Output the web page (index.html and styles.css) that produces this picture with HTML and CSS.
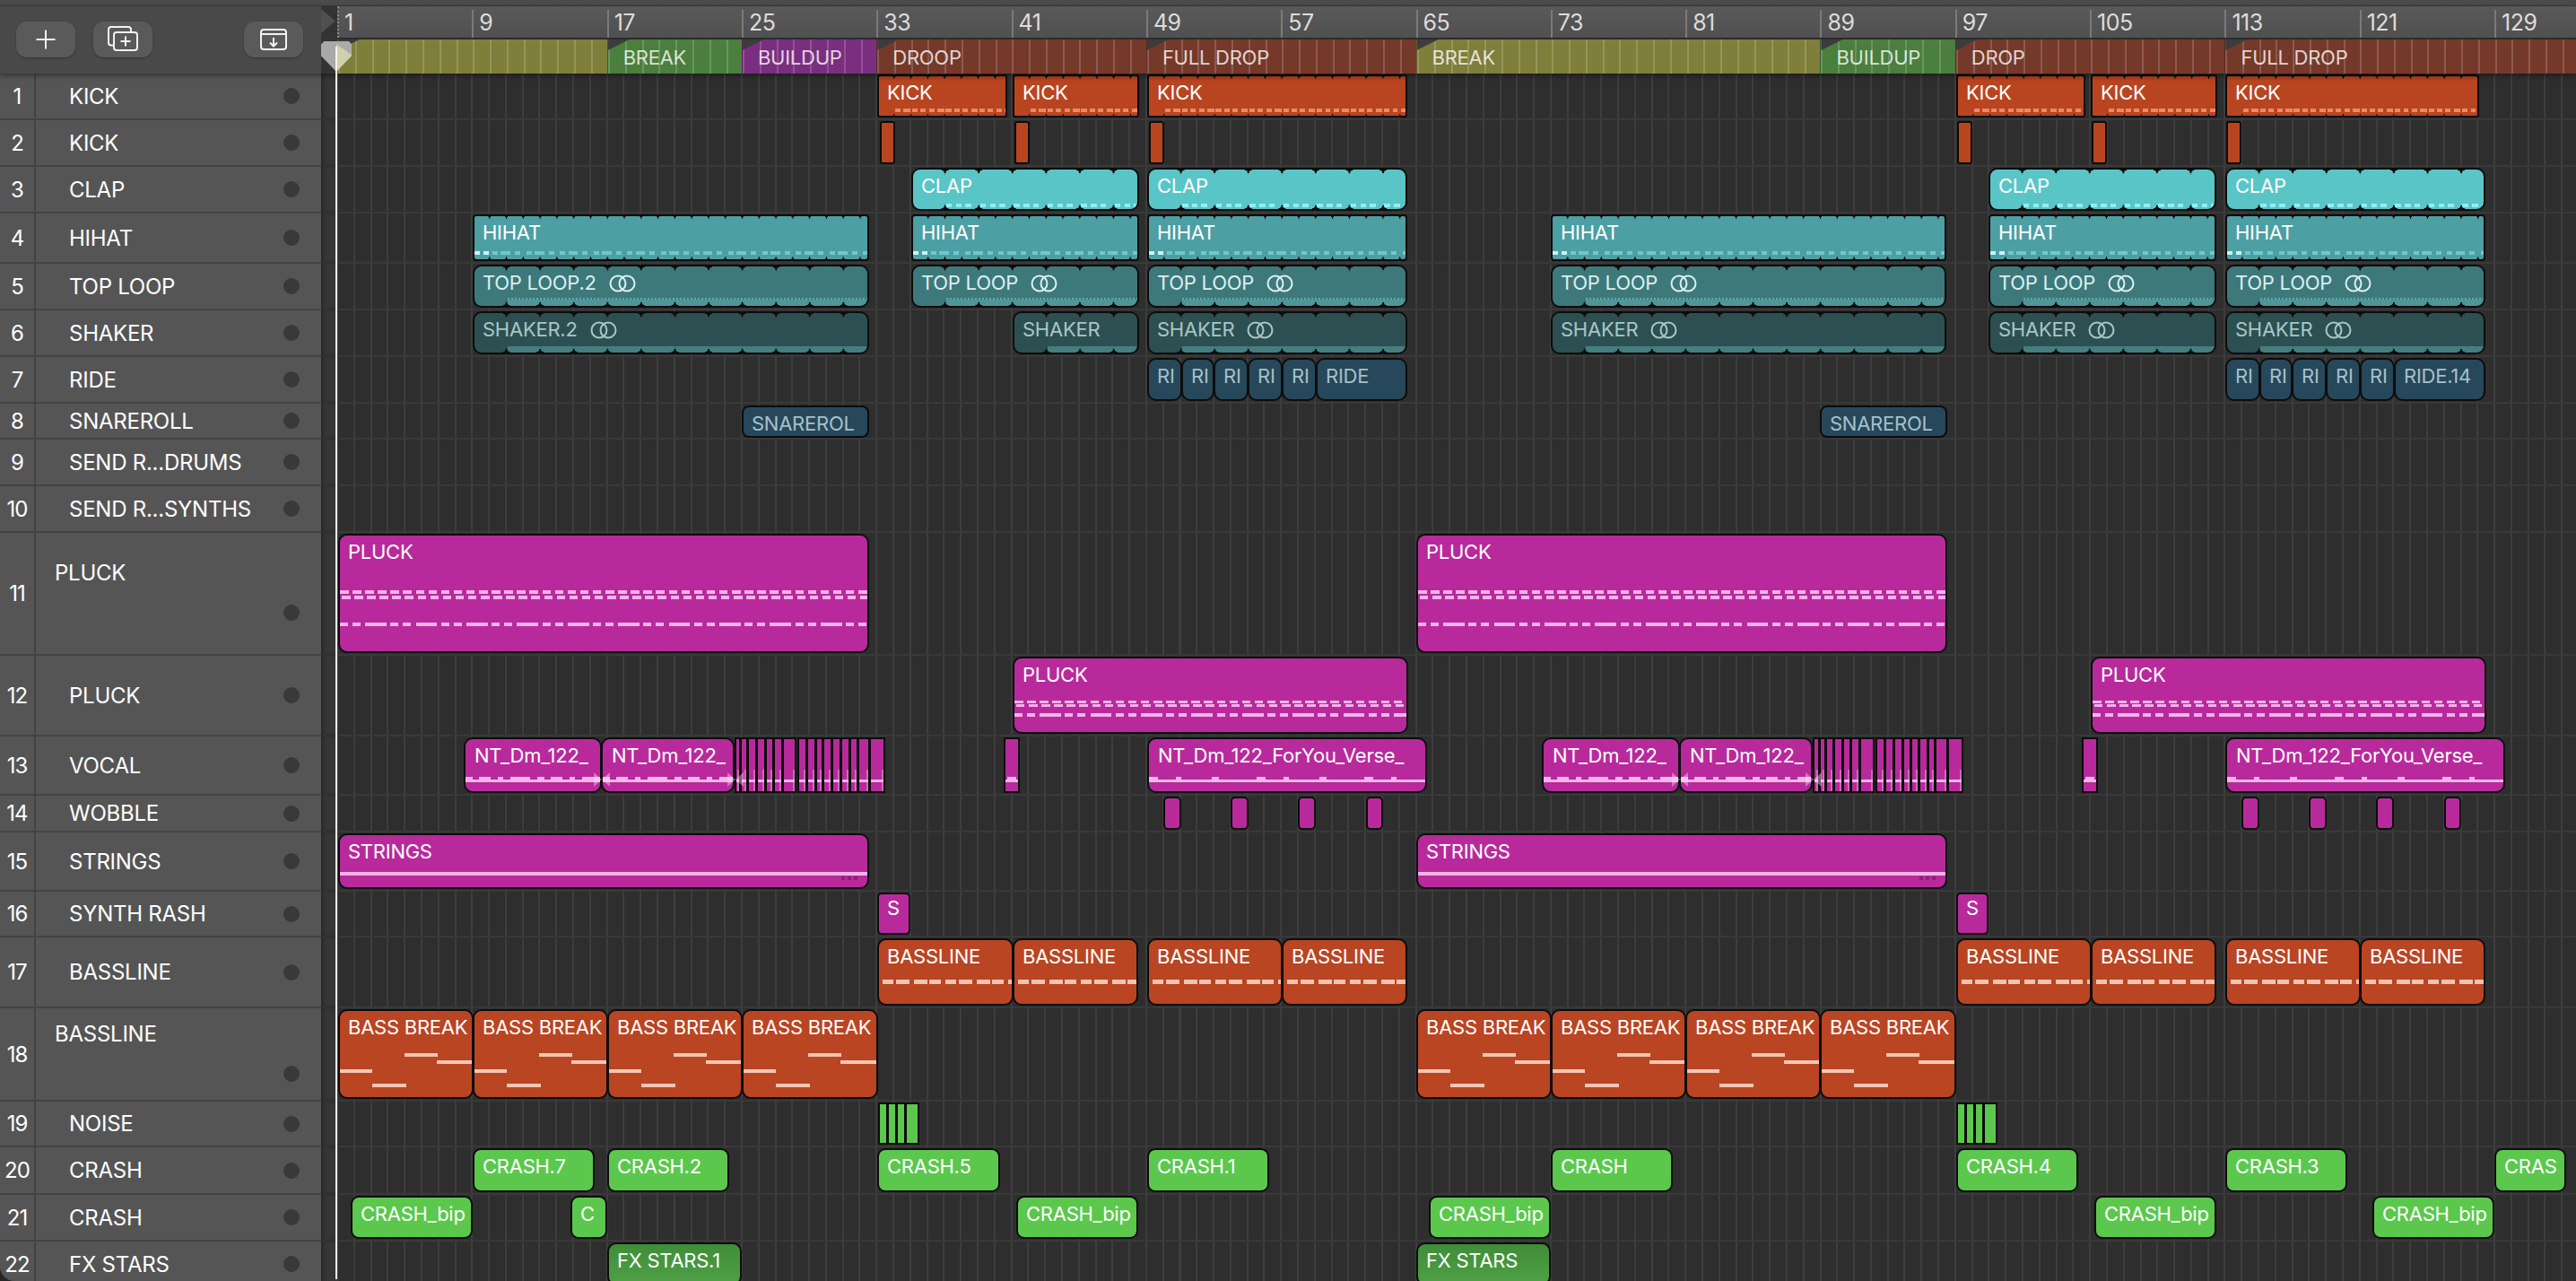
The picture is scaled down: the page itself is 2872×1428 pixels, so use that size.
FILE: index.html
```html
<!DOCTYPE html>
<html lang="en">
<head>
<meta charset="utf-8">
<title>Arrangement</title>
<link rel="stylesheet" href="styles.css">
</head>
<body>
<div class="daw">
  <div class="topstrip"></div>
  <header class="header">
    <div class="tools">
      <button class="tool" aria-label="New track"><svg width="24" height="24" viewBox="0 0 24 24"><path d="M12 1.5v21M1.5 12h21"/></svg></button>
      <button class="tool" aria-label="Duplicate track"><svg width="36" height="30" viewBox="0 0 36 30"><path d="M7 21.5H5a3 3 0 0 1-3-3V4a3 3 0 0 1 3-3h19a3 3 0 0 1 3 3v3"/><rect x="8" y="7" width="26" height="20" rx="3"/><path d="M21 11.5v11M15.5 17h11"/></svg></button>
      <button class="tool tool-end" aria-label="Load"><svg width="32" height="26" viewBox="0 0 32 26"><rect x="2" y="2" width="28" height="22" rx="3"/><path d="M2 7h28M16 11v9M12 16.5l4 4 4-4"/></svg></button>
    </div>
    <div class="corner"><span class="corner-tri"></span></div>
    <div class="timebar">
      <div class="ruler">
        <span class="bar first">1</span><span class="bar">9</span><span class="bar">17</span><span class="bar">25</span><span class="bar">33</span><span class="bar">41</span><span class="bar">49</span><span class="bar">57</span><span class="bar">65</span><span class="bar">73</span><span class="bar">81</span><span class="bar">89</span><span class="bar">97</span><span class="bar">105</span><span class="bar">113</span><span class="bar">121</span><span class="bar">129</span>
      </div>
      <div class="markers">
        <div class="marker olive" style="--b:16"></div>
        <div class="marker green" style="--b:8">BREAK</div>
        <div class="marker purple" style="--b:8">BUILDUP</div>
        <div class="marker brown" style="--b:16">DROOP</div>
        <div class="marker brown" style="--b:16">FULL DROP</div>
        <div class="marker olive" style="--b:24">BREAK</div>
        <div class="marker green" style="--b:8">BUILDUP</div>
        <div class="marker brown" style="--b:16">DROP</div>
        <div class="marker brown last">FULL DROP</div>
      </div>
    </div>
  </header>

  <main class="tracks">
    <section class="track h52">
      <div class="head"><span class="num">1</span><span class="name">KICK</span><span class="dot"></span></div><div class="gutter"></div>
      <div class="lane">
        <div class="clip notched kick" style="--x:978;--w:145">KICK</div>
        <div class="clip notched kick" style="--x:1129;--w:141">KICK</div>
        <div class="clip notched kick" style="--x:1279;--w:290">KICK</div>
        <div class="clip notched kick" style="--x:2181;--w:144">KICK</div>
        <div class="clip notched kick" style="--x:2331;--w:141">KICK</div>
        <div class="clip notched kick" style="--x:2481;--w:283">KICK</div>
      </div>
    </section>
    <section class="track h52">
      <div class="head"><span class="num">2</span><span class="name">KICK</span><span class="dot"></span></div><div class="gutter"></div>
      <div class="lane">
        <div class="clip tick" style="--x:981;--w:17"></div>
        <div class="clip tick" style="--x:1131;--w:17"></div>
        <div class="clip tick" style="--x:1281;--w:17"></div>
        <div class="clip tick" style="--x:2182;--w:17"></div>
        <div class="clip tick" style="--x:2332;--w:17"></div>
        <div class="clip tick" style="--x:2482;--w:17"></div>
      </div>
    </section>
    <section class="track h52">
      <div class="head"><span class="num">3</span><span class="name">CLAP</span><span class="dot"></span></div><div class="gutter"></div>
      <div class="lane">
        <div class="clip notched clap" style="--x:1016;--w:254">CLAP</div>
        <div class="clip notched clap" style="--x:1279;--w:290">CLAP</div>
        <div class="clip notched clap" style="--x:2217;--w:254">CLAP</div>
        <div class="clip notched clap" style="--x:2481;--w:290">CLAP</div>
      </div>
    </section>
    <section class="track h56">
      <div class="head"><span class="num">4</span><span class="name">HIHAT</span><span class="dot"></span></div><div class="gutter"></div>
      <div class="lane">
        <div class="clip notched hat" style="--x:527;--w:442">HIHAT</div>
        <div class="clip notched hat" style="--x:1016;--w:254">HIHAT</div>
        <div class="clip notched hat" style="--x:1279;--w:290">HIHAT</div>
        <div class="clip notched hat" style="--x:1729;--w:441">HIHAT</div>
        <div class="clip notched hat" style="--x:2217;--w:254">HIHAT</div>
        <div class="clip notched hat" style="--x:2481;--w:290">HIHAT</div>
      </div>
    </section>
    <section class="track h52">
      <div class="head"><span class="num">5</span><span class="name">TOP LOOP</span><span class="dot"></span></div><div class="gutter"></div>
      <div class="lane">
        <div class="clip notched tloop" style="--x:527;--w:442">TOP LOOP.2<svg class="loop" width="30" height="20" viewBox="0 0 30 20"><circle cx="10" cy="10" r="8.5"/><circle cx="20" cy="10" r="8.5"/></svg></div>
        <div class="clip notched tloop" style="--x:1016;--w:254">TOP LOOP<svg class="loop" width="30" height="20" viewBox="0 0 30 20"><circle cx="10" cy="10" r="8.5"/><circle cx="20" cy="10" r="8.5"/></svg></div>
        <div class="clip notched tloop" style="--x:1279;--w:290">TOP LOOP<svg class="loop" width="30" height="20" viewBox="0 0 30 20"><circle cx="10" cy="10" r="8.5"/><circle cx="20" cy="10" r="8.5"/></svg></div>
        <div class="clip notched tloop" style="--x:1729;--w:441">TOP LOOP<svg class="loop" width="30" height="20" viewBox="0 0 30 20"><circle cx="10" cy="10" r="8.5"/><circle cx="20" cy="10" r="8.5"/></svg></div>
        <div class="clip notched tloop" style="--x:2217;--w:254">TOP LOOP<svg class="loop" width="30" height="20" viewBox="0 0 30 20"><circle cx="10" cy="10" r="8.5"/><circle cx="20" cy="10" r="8.5"/></svg></div>
        <div class="clip notched tloop" style="--x:2481;--w:290">TOP LOOP<svg class="loop" width="30" height="20" viewBox="0 0 30 20"><circle cx="10" cy="10" r="8.5"/><circle cx="20" cy="10" r="8.5"/></svg></div>
      </div>
    </section>
    <section class="track h52">
      <div class="head"><span class="num">6</span><span class="name">SHAKER</span><span class="dot"></span></div><div class="gutter"></div>
      <div class="lane">
        <div class="clip notched shk" style="--x:527;--w:442">SHAKER.2<svg class="loop" width="30" height="20" viewBox="0 0 30 20"><circle cx="10" cy="10" r="8.5"/><circle cx="20" cy="10" r="8.5"/></svg></div>
        <div class="clip notched shk" style="--x:1129;--w:141">SHAKER</div>
        <div class="clip notched shk" style="--x:1279;--w:290">SHAKER<svg class="loop" width="30" height="20" viewBox="0 0 30 20"><circle cx="10" cy="10" r="8.5"/><circle cx="20" cy="10" r="8.5"/></svg></div>
        <div class="clip notched shk" style="--x:1729;--w:441">SHAKER<svg class="loop" width="30" height="20" viewBox="0 0 30 20"><circle cx="10" cy="10" r="8.5"/><circle cx="20" cy="10" r="8.5"/></svg></div>
        <div class="clip notched shk" style="--x:2217;--w:254">SHAKER<svg class="loop" width="30" height="20" viewBox="0 0 30 20"><circle cx="10" cy="10" r="8.5"/><circle cx="20" cy="10" r="8.5"/></svg></div>
        <div class="clip notched shk" style="--x:2481;--w:290">SHAKER<svg class="loop" width="30" height="20" viewBox="0 0 30 20"><circle cx="10" cy="10" r="8.5"/><circle cx="20" cy="10" r="8.5"/></svg></div>
      </div>
    </section>
    <section class="track h52">
      <div class="head"><span class="num">7</span><span class="name">RIDE</span><span class="dot"></span></div><div class="gutter"></div>
      <div class="lane">
        <div class="clip ride" style="--x:1279;--w:39">RI</div>
        <div class="clip ride" style="--x:1317;--w:37">RI</div>
        <div class="clip ride" style="--x:1353;--w:39">RI</div>
        <div class="clip ride" style="--x:1391;--w:39">RI</div>
        <div class="clip ride" style="--x:1429;--w:39">RI</div>
        <div class="clip ride" style="--x:1467;--w:102">RIDE</div>
        <div class="clip ride" style="--x:2481;--w:39">RI</div>
        <div class="clip ride" style="--x:2519;--w:37">RI</div>
        <div class="clip ride" style="--x:2555;--w:39">RI</div>
        <div class="clip ride" style="--x:2593;--w:39">RI</div>
        <div class="clip ride" style="--x:2631;--w:39">RI</div>
        <div class="clip ride" style="--x:2669;--w:102">RIDE.14</div>
      </div>
    </section>
    <section class="track h40">
      <div class="head"><span class="num">8</span><span class="name">SNAREROLL</span><span class="dot"></span></div><div class="gutter"></div>
      <div class="lane">
        <div class="clip ride snare" style="--x:827;--w:142">SNAREROL</div>
        <div class="clip ride snare" style="--x:2029;--w:142">SNAREROL</div>
      </div>
    </section>
    <section class="track h52">
      <div class="head"><span class="num">9</span><span class="name">SEND R...DRUMS</span><span class="dot"></span></div><div class="gutter"></div>
      <div class="lane"></div>
    </section>
    <section class="track h52">
      <div class="head"><span class="num">10</span><span class="name">SEND R...SYNTHS</span><span class="dot"></span></div><div class="gutter"></div>
      <div class="lane"></div>
    </section>
    <section class="track h137 tall t11">
      <div class="head"><span class="num">11</span><span class="name">PLUCK</span><span class="dot"></span></div><div class="gutter"></div>
      <div class="lane">
        <div class="clip pluck" style="--x:377;--w:592">PLUCK</div>
        <div class="clip pluck" style="--x:1579;--w:592">PLUCK</div>
      </div>
    </section>
    <section class="track h90">
      <div class="head"><span class="num">12</span><span class="name">PLUCK</span><span class="dot"></span></div><div class="gutter"></div>
      <div class="lane">
        <div class="clip pluck2" style="--x:1129;--w:441">PLUCK</div>
        <div class="clip pluck2" style="--x:2331;--w:441">PLUCK</div>
      </div>
    </section>
    <section class="track h66">
      <div class="head"><span class="num">13</span><span class="name">VOCAL</span><span class="dot"></span></div><div class="gutter"></div>
      <div class="lane">
        <div class="clip vocal" style="--x:517;--w:154">NT_Dm_122_</div>
        <div class="clip vocal" style="--x:670;--w:149">NT_Dm_122_</div>
        <div class="clip slice" style="--x:819;--w:7"></div><div class="clip slice" style="--x:825;--w:9"></div><div class="clip slice" style="--x:833;--w:11"></div><div class="clip slice" style="--x:843;--w:11"></div><div class="clip slice" style="--x:853;--w:10"></div><div class="clip slice" style="--x:862;--w:11"></div><div class="clip slice" style="--x:872;--w:16"></div>
        <div class="clip slice" style="--x:889;--w:11"></div><div class="clip slice" style="--x:899;--w:11"></div><div class="clip slice" style="--x:909;--w:9"></div><div class="clip slice" style="--x:917;--w:11"></div><div class="clip slice" style="--x:927;--w:11"></div><div class="clip slice" style="--x:937;--w:11"></div><div class="clip slice" style="--x:947;--w:10"></div><div class="clip slice" style="--x:956;--w:14"></div><div class="clip slice" style="--x:969;--w:18"></div>
        <div class="clip slice single" style="--x:1119;--w:18"></div>
        <div class="clip vocal sparse" style="--x:1279;--w:312">NT_Dm_122_ForYou_Verse_</div>
        <div class="clip vocal" style="--x:1719;--w:154">NT_Dm_122_</div>
        <div class="clip vocal" style="--x:1872;--w:149">NT_Dm_122_</div>
        <div class="clip slice" style="--x:2021;--w:8"></div><div class="clip slice" style="--x:2028;--w:8"></div><div class="clip slice" style="--x:2035;--w:10"></div><div class="clip slice" style="--x:2044;--w:11"></div><div class="clip slice" style="--x:2054;--w:10"></div><div class="clip slice" style="--x:2063;--w:11"></div><div class="clip slice" style="--x:2073;--w:17"></div>
        <div class="clip slice" style="--x:2091;--w:11"></div><div class="clip slice" style="--x:2101;--w:11"></div><div class="clip slice" style="--x:2111;--w:11"></div><div class="clip slice" style="--x:2121;--w:10"></div><div class="clip slice" style="--x:2130;--w:10"></div><div class="clip slice" style="--x:2139;--w:11"></div><div class="clip slice" style="--x:2149;--w:9"></div><div class="clip slice" style="--x:2157;--w:15"></div><div class="clip slice" style="--x:2171;--w:18"></div>
        <div class="clip slice single" style="--x:2321;--w:18"></div>
        <div class="clip vocal sparse" style="--x:2481;--w:312">NT_Dm_122_ForYou_Verse_</div>
        <span class="xfade" style="--x:662"></span>
        <span class="xfade" style="--x:811"></span>
        <span class="xfade" style="--x:1864"></span>
        <span class="xfade" style="--x:2013"></span>
      </div>
    </section>
    <section class="track h41">
      <div class="head"><span class="num">14</span><span class="name">WOBBLE</span><span class="dot"></span></div><div class="gutter"></div>
      <div class="lane">
        <div class="clip wob" style="--x:1297;--w:20"></div>
        <div class="clip wob" style="--x:1372;--w:20"></div>
        <div class="clip wob" style="--x:1447;--w:20"></div>
        <div class="clip wob" style="--x:1523;--w:19"></div>
        <div class="clip wob" style="--x:2499;--w:20"></div>
        <div class="clip wob" style="--x:2574;--w:20"></div>
        <div class="clip wob" style="--x:2649;--w:20"></div>
        <div class="clip wob" style="--x:2725;--w:19"></div>
      </div>
    </section>
    <section class="track h66">
      <div class="head"><span class="num">15</span><span class="name">STRINGS</span><span class="dot"></span></div><div class="gutter"></div>
      <div class="lane">
        <div class="clip strings" style="--x:377;--w:592">STRINGS</div>
        <div class="clip strings" style="--x:1579;--w:592">STRINGS</div>
      </div>
    </section>
    <section class="track h51">
      <div class="head"><span class="num">16</span><span class="name">SYNTH RASH</span><span class="dot"></span></div><div class="gutter"></div>
      <div class="lane">
        <div class="clip wob" style="--x:978;--w:37">S</div>
        <div class="clip wob" style="--x:2181;--w:36">S</div>
      </div>
    </section>
    <section class="track h79">
      <div class="head"><span class="num">17</span><span class="name">BASSLINE</span><span class="dot"></span></div><div class="gutter"></div>
      <div class="lane">
        <div class="clip bass" style="--x:978;--w:152">BASSLINE</div>
        <div class="clip bass" style="--x:1129;--w:140">BASSLINE</div>
        <div class="clip bass" style="--x:1279;--w:151">BASSLINE</div>
        <div class="clip bass" style="--x:1429;--w:140">BASSLINE</div>
        <div class="clip bass" style="--x:2181;--w:151">BASSLINE</div>
        <div class="clip bass" style="--x:2331;--w:140">BASSLINE</div>
        <div class="clip bass" style="--x:2481;--w:151">BASSLINE</div>
        <div class="clip bass" style="--x:2631;--w:140">BASSLINE</div>
      </div>
    </section>
    <section class="track h104 tall t18">
      <div class="head"><span class="num">18</span><span class="name">BASSLINE</span><span class="dot"></span></div><div class="gutter"></div>
      <div class="lane">
        <div class="clip brk" style="--x:377;--w:151">BASS BREAK</div>
        <div class="clip brk" style="--x:527;--w:151">BASS BREAK</div>
        <div class="clip brk" style="--x:677;--w:151">BASS BREAK</div>
        <div class="clip brk" style="--x:827;--w:152">BASS BREAK</div>
        <div class="clip brk" style="--x:1579;--w:151">BASS BREAK</div>
        <div class="clip brk" style="--x:1729;--w:151">BASS BREAK</div>
        <div class="clip brk" style="--x:1879;--w:151">BASS BREAK</div>
        <div class="clip brk" style="--x:2029;--w:152">BASS BREAK</div>
      </div>
    </section>
    <section class="track h51">
      <div class="head"><span class="num">19</span><span class="name">NOISE</span><span class="dot"></span></div><div class="gutter"></div>
      <div class="lane">
        <div class="clip gslice" style="--x:979;--w:11"></div><div class="clip gslice" style="--x:989;--w:11"></div><div class="clip gslice" style="--x:999;--w:11"></div><div class="clip gslice" style="--x:1009;--w:16"></div>
        <div class="clip gslice" style="--x:2181;--w:11"></div><div class="clip gslice" style="--x:2191;--w:11"></div><div class="clip gslice" style="--x:2201;--w:11"></div><div class="clip gslice" style="--x:2211;--w:16"></div>
      </div>
    </section>
    <section class="track h53">
      <div class="head"><span class="num">20</span><span class="name">CRASH</span><span class="dot"></span></div><div class="gutter"></div>
      <div class="lane">
        <div class="clip crash" style="--x:527;--w:136">CRASH.7</div>
        <div class="clip crash" style="--x:677;--w:136">CRASH.2</div>
        <div class="clip crash" style="--x:978;--w:137">CRASH.5</div>
        <div class="clip crash" style="--x:1279;--w:136">CRASH.1</div>
        <div class="clip crash" style="--x:1729;--w:136">CRASH</div>
        <div class="clip crash" style="--x:2181;--w:136">CRASH.4</div>
        <div class="clip crash" style="--x:2481;--w:136">CRASH.3</div>
        <div class="clip crash" style="--x:2781;--w:80">CRAS</div>
      </div>
    </section>
    <section class="track h52">
      <div class="head"><span class="num">21</span><span class="name">CRASH</span><span class="dot"></span></div><div class="gutter"></div>
      <div class="lane">
        <div class="clip crash" style="--x:391;--w:136">CRASH_bip</div>
        <div class="clip crash" style="--x:636;--w:41">C</div>
        <div class="clip crash" style="--x:1133;--w:136">CRASH_bip</div>
        <div class="clip crash" style="--x:1593;--w:136">CRASH_bip</div>
        <div class="clip crash" style="--x:2335;--w:136">CRASH_bip</div>
        <div class="clip crash" style="--x:2645;--w:136">CRASH_bip</div>
      </div>
    </section>
    <section class="track h52">
      <div class="head"><span class="num">22</span><span class="name">FX STARS</span><span class="dot"></span></div><div class="gutter"></div>
      <div class="lane">
        <div class="clip fx" style="--x:677;--w:150">FX STARS.1</div>
        <div class="clip fx" style="--x:1579;--w:150">FX STARS</div>
      </div>
    </section>
  </main>

  <div class="playhead"><span class="cap"></span><span class="line"></span></div>
</div>
</body>
</html>
```
FILE: styles.css
```css
* { box-sizing: border-box; }
html, body { margin: 0; height: 100%; background: #262626; }
body { font-family: Inter, "Liberation Sans", sans-serif; color: #fff; overflow: hidden; }

.daw {
  position: relative;
  width: 2872px;
  height: 1428px;
  display: flex;
  flex-direction: column;
  overflow: hidden;
  background: #2e2e2e;
  border-bottom-left-radius: 16px;
}
.topstrip { flex: none; height: 7px; background: #4b4b4b; border-bottom: 1px solid #3d3d3d; }

/* header */
.header { flex: none; display: flex; height: 75px; position: relative; z-index: 3; box-shadow: 0 2px 6px rgba(0,0,0,.45); }
.tools { width: 358px; flex: none; display: flex; align-items: center; gap: 20px; padding: 0 20px 2px 18px; background: #494949; }
.tool {
  width: 66px; height: 40px; flex: none; padding: 0;
  display: flex; align-items: center; justify-content: center;
  background: #5a5a5a; border: 0; border-radius: 12px;
  box-shadow: 0 1px 2px rgba(0,0,0,.3);
}
.tool svg { fill: none; stroke: #f2f2f2; stroke-width: 2; display: block; }
.tool-end { margin-left: auto; }
.corner { width: 18px; flex: none; background: #333; }
.corner-tri { display: block; width: 16px; height: 27px; margin-top: 3px; background: #505050; clip-path: polygon(0 0, 100% 50%, 0 100%); }
.timebar { flex: 1; min-width: 0; display: flex; flex-direction: column; }

.ruler { height: 37px; flex: none; display: flex; background: linear-gradient(#595959, #505050); border-bottom: 2px solid #2b2b2b; overflow: hidden; }
.bar {
  width: 150.32px; flex: none;
  font-size: 25px; line-height: 28px; color: #dcdcdc;
  padding-left: 6px; margin-top: 4px;
  border-left: 2px solid #7a7a7a;
  letter-spacing: -.5px;
}
.bar.first { border-left: 2px dotted #8a8a8a; margin-top: 0; padding-top: 4px; }

.markers { flex: 1; display: flex; min-height: 0; }
.marker {
  position: relative;
  width: calc(var(--b) * 18.79px); flex: none;
  font-size: 22px; line-height: 40px; color: rgba(255,255,255,.8);
  letter-spacing: -.25px;
  padding-left: 17px;
  background-image: repeating-linear-gradient(90deg, rgba(255,255,255,.17) 0 2px, transparent 2px 18.79px);
  border-left: 1px solid rgba(0,0,0,.25);
}
.marker::before { content: ""; position: absolute; left: 0; top: 0; width: 24px; height: 12px; background: #3c3c3c; clip-path: polygon(0 0, 100% 0, 0 100%); }
.marker.last { flex: 1; }
.olive { background-color: #7f7e3a; }
.green { background-color: #4a7f3d; }
.purple { background-color: #7a2e80; }
.brown { background-color: #75392a; }

/* tracks */
.tracks { flex: 1; min-height: 0; display: flex; flex-direction: column; overflow: hidden; }
.track { flex: none; display: flex; }
.h40 { height: 40px; } .h41 { height: 41px; } .h51 { height: 51px; } .h52 { height: 52px; }
.h53 { height: 53px; } .h56 { height: 56px; } .h66 { height: 66px; } .h79 { height: 79px; }
.h90 { height: 90px; } .h104 { height: 104px; } .h137 { height: 137px; }

.head { width: 358px; flex: none; display: flex; align-items: center; background: #555; border-bottom: 2px solid #434343; position: relative; }
.num { width: 38px; flex: none; align-self: stretch; display: flex; align-items: center; justify-content: center; font-size: 24px; letter-spacing: -1px; border-right: 2px solid #434343; box-sizing: content-box; }
.name { margin-left: 37px; font-size: 24px; letter-spacing: -.25px; white-space: nowrap; }
.dot { width: 18px; height: 18px; margin-left: auto; margin-right: 24px; border-radius: 50%; background: #393939; flex: none; }
.gutter { width: 17px; flex: none; background: #363636; border-bottom: 2px solid #303030; box-shadow: inset 4px 0 4px -2px rgba(0,0,0,.35); }

.tall .name { align-self: flex-start; margin-left: 21px; }
.tall .dot { align-self: flex-start; }
.t11 .name { margin-top: 30px; } .t11 .dot { margin-top: 80px; }
.t18 .name { margin-top: 14px; } .t18 .dot { margin-top: 64px; }

.lane {
  flex: 1; min-width: 0; position: relative;
  border-bottom: 2px solid #393939;
  background-image: repeating-linear-gradient(90deg, #3d3d3d 0 2px, transparent 2px 18.79px);
}

/* clips */
.clip {
  position: absolute;
  left: calc(var(--x) * 1px - 375px);
  width: calc(var(--w) * 1px);
  top: 1px; bottom: 1px;
  isolation: isolate;
  overflow: hidden;
  white-space: nowrap;
  font-size: 22px; line-height: 31px;
  letter-spacing: -.25px;
  padding: 3px 0 0 9px;
  border: 2px solid #0c0c0c;
  border-radius: 10px;
  color: #fff;
  background-repeat: no-repeat;
}
.loop { fill: none; stroke: currentColor; stroke-width: 2; margin-left: 14px; vertical-align: -3px; }

.notched::before, .notched::after {
  content: ""; position: absolute; left: 0; right: 0; z-index: -1;
  height: var(--r); background: #0c0c0c;
  -webkit-mask-image:
    radial-gradient(circle var(--r) at calc(50% - var(--r)) var(--cy), transparent 96%, #000 100%),
    radial-gradient(circle var(--r) at calc(50% + var(--r)) var(--cy), transparent 96%, #000 100%),
    linear-gradient(90deg, transparent calc(50% - var(--r)), #000 0, #000 calc(50% + var(--r)), transparent 0);
  mask-image:
    radial-gradient(circle var(--r) at calc(50% - var(--r)) var(--cy), transparent 96%, #000 100%),
    radial-gradient(circle var(--r) at calc(50% + var(--r)) var(--cy), transparent 96%, #000 100%),
    linear-gradient(90deg, transparent calc(50% - var(--r)), #000 0, #000 calc(50% + var(--r)), transparent 0);
  mask-size: var(--p) var(--r);
  mask-repeat: repeat-x;
  mask-position: calc(var(--p) / -2 - 2px) 0;
  mask-composite: intersect;
  -webkit-mask-composite: source-in;
}
.notched::before { top: 0; --cy: 100%; }
.notched::after { bottom: 0; --cy: 0%; }

.kick, .tick {
  background-color: #b94520;
  border-radius: 3px;
}
.kick {
  --p: 18.79px; --r: 2.5px;
  background-image:
    linear-gradient(#a63d1c, rgba(185,69,32,0) 5px),
    repeating-linear-gradient(90deg, #e98a67 0 6px, transparent 6px 9.4px, #e98a67 9.4px 17px, transparent 17px 18.8px, #e98a67 18.8px 25px, transparent 25px 28.2px, #e98a67 28.2px 34px, transparent 34px 37.58px);
  background-position: 0 0, 18px calc(100% - 4px);
  background-size: 100% 100%, 100% 4px;
}
.clap {
  --p: 37.58px; --r: 6px;
  background-color: #5ac5c7;
  background-image: repeating-linear-gradient(90deg, #8eeff1 0 6.5px, transparent 6.5px 11px, #8eeff1 11px 17.5px, transparent 17.5px 21.5px, #8eeff1 21.5px 28px, transparent 28px 37.58px);
  background-position: 37px calc(100% - 2px);
  background-size: 100% 4px;
}
.hat {
  --p: 18.79px; --r: 3px;
  border-radius: 4px;
  background-color: #4c9fa3;
  background-image:
    linear-gradient(90deg, #c8f6f6 0 6px, transparent 6px 10px, #c8f6f6 10px 16px, transparent 16px),
    repeating-linear-gradient(90deg, #6fc9cc 0 6px, transparent 6px 9.4px, #6fc9cc 9.4px 20px, transparent 20px 25px, #6fc9cc 25px 31px, transparent 31px 37.58px);
  background-position: 0 calc(100% - 5px), 20px calc(100% - 5px);
  background-size: 100% 4px, 100% 4px;
}
.tloop, .shk { --p: 37.58px; --r: 6px; }
.tloop {
  color: #dcefef;
  background-color: #3d797b;
  background-image:
    repeating-linear-gradient(90deg, #67a7a8 0 2px, transparent 2px 4px),
    linear-gradient(#4f9698, #4f9698);
  background-position: 37px calc(100% - 7px), 37px 100%;
  background-size: 100% 2px, 100% 7px;
}
.shk {
  color: #a9c6c6;
  background-color: #2c5052;
  background-image: linear-gradient(#467d7e, #467d7e);
  background-position: 37px 100%;
  background-size: 100% 7px;
}
.ride { color: #a7c0ca; background-color: #26485a; padding-left: 9px; }
.ride.snare { top: 2px; bottom: 0; border-radius: 8px; }

.tick { padding: 0; }
.pluck, .pluck2, .vocal, .slice, .wob, .strings { background-color: #b82a9c; }
.pluck {
  background-image:
    repeating-linear-gradient(90deg, #f4b3e8 0 9.5px, transparent 9.5px 14.1px),
    repeating-linear-gradient(90deg, #f4b3e8 0 9.5px, transparent 9.5px 14.1px),
    repeating-linear-gradient(90deg, #f4b3e8 0 9px, transparent 9px 14.1px, #f4b3e8 14.1px 23px, transparent 23px 28.2px, #f4b3e8 28.2px 52px, transparent 52px 56.4px);
  background-position: 0 61px, 2px 67px, 0 97px;
  background-size: 100% 4px, 100% 4px, 100% 4px;
}
.pluck2 {
  background-image:
    repeating-linear-gradient(90deg, #f4b3e8 0 9.5px, transparent 9.5px 14.1px),
    repeating-linear-gradient(90deg, #f4b3e8 0 9.5px, transparent 9.5px 14.1px),
    repeating-linear-gradient(90deg, #f4b3e8 0 9px, transparent 9px 14.1px, #f4b3e8 14.1px 23px, transparent 23px 28.2px, #f4b3e8 28.2px 52px, transparent 52px 56.4px);
  background-position: 0 47px, 2px 51px, 0 61px;
  background-size: 100% 3px, 100% 3px, 100% 4px;
}
.vocal {
  padding-left: 10px;
  background-image:
    repeating-linear-gradient(90deg, #f3b6e8 0 8px, transparent 8px 15px, #f3b6e8 15px 28px, transparent 28px 36px, #f3b6e8 36px 42px, transparent 42px 50px, #f3b6e8 50px 72px, transparent 72px 80px),
    linear-gradient(#f3b6e8, #f3b6e8);
  background-position: 0 42px, 0 45px;
  background-size: 100% 3px, 100% 3px;
}
.vocal.sparse {
  background-image:
    repeating-linear-gradient(90deg, #f3b6e8 0 10px, transparent 10px 30px, #f3b6e8 30px 36px, transparent 36px 70px, #f3b6e8 70px 78px, transparent 78px 120px),
    linear-gradient(#f3b6e8, #f3b6e8);
}
.slice {
  padding: 0; border-radius: 1px;
  background-image:
    linear-gradient(#f3b6e8, #f3b6e8),
    linear-gradient(rgba(255,255,255,.3), rgba(255,255,255,.3));
  background-position: 0 45px, 100% 34px;
  background-size: 100% 3px, 2px 24px;
}
.slice.single {
  background-image: linear-gradient(#f3b6e8, #f3b6e8), linear-gradient(#f3b6e8, #f3b6e8);
  background-position: 0 45px, 2px 42px;
  background-size: 100% 3px, 10px 3px;
}
.xfade {
  position: absolute;
  left: calc(var(--x) * 1px - 375px);
  top: 40px; width: 18px; height: 16px;
  background: rgba(255,225,250,.42);
  clip-path: polygon(0 0, 50% 50%, 100% 0, 100% 100%, 50% 50%, 0 100%);
  z-index: 1;
}
.wob { padding: 0 0 0 9px; border-radius: 5px; }
.strings {
  background-image:
    linear-gradient(#f4b3e8, #f4b3e8),
    repeating-linear-gradient(90deg, #8c1f76 0 4px, transparent 4px 7px);
  background-position: 0 41px, calc(100% - 8px) 46px;
  background-size: 100% 4px, 21px 4px;
}
.bass, .brk { background-color: #b94522; }
.bass {
  background-image: repeating-linear-gradient(90deg, #f3c3b0 0 12px, transparent 12px 15px, #f3c3b0 15px 30px, transparent 30px 35px, #f3c3b0 35px 50px, transparent 50px 52px, #f3c3b0 52px 65px, transparent 65px 70px);
  background-position: 4px 44px;
  background-size: 100% 5px;
}
.brk {
  background-image:
    linear-gradient(#f5c6b4, #f5c6b4),
    linear-gradient(#f5c6b4, #f5c6b4),
    linear-gradient(#f5c6b4, #f5c6b4),
    linear-gradient(#f5c6b4, #f5c6b4);
  background-position: 72px 47px, 108px 55px, 0 65px, 36px 81px;
  background-size: 37px 4px, 40px 4px, 36px 4px, 38px 4px;
}
.gslice, .crash { background-color: #5bc84d; }
.gslice { padding: 0; border-radius: 1px; }
.crash { border-radius: 9px; }
.fx { background: linear-gradient(#3f8d38, #4fa046); }

/* playhead */
.playhead { position: absolute; left: 358px; top: 46px; width: 34px; bottom: 2px; z-index: 5; pointer-events: none; }
.cap {
  display: block; width: 34px; height: 34px;
  background: linear-gradient(215deg, #ababab 26%, transparent 26%), linear-gradient(90deg, #a9a9a9 50%, #d0d1a8 50%);
  clip-path: polygon(10% 0, 90% 0, 100% 10%, 100% 48%, 50% 100%, 0 48%, 0 10%);
}
.line { position: absolute; left: 16px; top: 6px; bottom: 0; width: 2px; background: #f5f5f5; }
```
